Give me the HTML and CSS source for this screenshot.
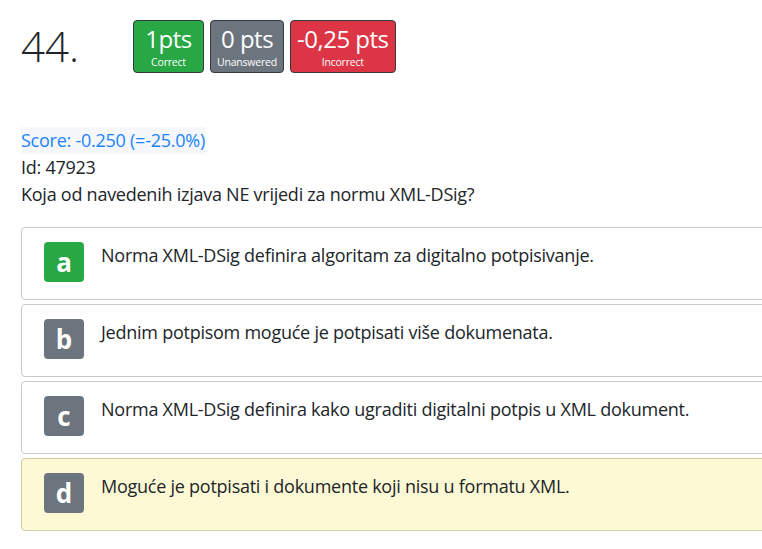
FILE: index.html
```html
<!DOCTYPE html>
<html lang="hr">
<head>
<meta charset="utf-8">
<title>Pitanje 44</title>
<link rel="stylesheet" href="styles.css">
</head>
<body>
<div class="page">
  <div class="header">
    <div class="qnum">44.</div>
    <div class="badges">
      <div class="pts pts-correct"><span class="pts-val">1pts</span><span class="pts-lbl">Correct</span></div>
      <div class="pts pts-unanswered"><span class="pts-val">0 pts</span><span class="pts-lbl">Unanswered</span></div>
      <div class="pts pts-incorrect"><span class="pts-val">-0,25 pts</span><span class="pts-lbl">Incorrect</span></div>
    </div>
  </div>
  <div class="meta">
    <span class="score">Score: -0.250 (=-25.0%)</span>
    <div class="qid">Id: 47923</div>
    <div class="qtext">Koja od navedenih izjava NE vrijedi za normu XML-DSig?</div>
  </div>
  <div class="answers">
    <div class="answer">
      <div class="letter letter-correct">a</div>
      <div class="atext">Norma XML-DSig definira algoritam za digitalno potpisivanje.</div>
    </div>
    <div class="answer">
      <div class="letter">b</div>
      <div class="atext">Jednim potpisom moguće je potpisati više dokumenata.</div>
    </div>
    <div class="answer">
      <div class="letter">c</div>
      <div class="atext">Norma XML-DSig definira kako ugraditi digitalni potpis u XML dokument.</div>
    </div>
    <div class="answer answer-selected">
      <div class="letter">d</div>
      <div class="atext">Moguće je potpisati i dokumente koji nisu u formatu XML.</div>
    </div>
  </div>
</div>
</body>
</html>
```

FILE: styles.css
```css
html, body {
  margin: 0;
  padding: 0;
  overflow: hidden;
  background: #fff;
}

body {
  font-family: "Open Sans", "Noto Sans", sans-serif;
  color: #212529;
  font-size: 18px;
  line-height: 27px;
  letter-spacing: -0.25px;
}

.page {
  padding: 20px 0 0 21px;
  width: 800px;
}

.header {
  display: flex;
  align-items: flex-start;
}

.qnum {
  width: 112px;
  font-size: 42px;
  font-weight: 300;
  line-height: 51px;
  letter-spacing: 0;
  color: #212529;
}

.badges {
  display: flex;
  gap: 6px;
}

.pts {
  display: flex;
  flex-direction: column;
  align-items: center;
  min-width: 71px;
  box-sizing: border-box;
  height: 53px;
  padding: 4px 6px 0;
  border: 1px solid #343a40;
  border-radius: 4px;
  color: #fff;
}

.pts-val {
  font-size: 24px;
  line-height: 28px;
  letter-spacing: -0.5px;
}

.pts-lbl {
  font-size: 10.5px;
  line-height: 18px;
  letter-spacing: -0.2px;
  font-weight: 500;
}

.pts-correct { background: #28a745; }
.pts-unanswered { background: #6c757d; }
.pts-incorrect { background: #dc3545; }

.meta {
  margin-top: 54px;
}

.score {
  display: inline-block;
  background: #f5f7fa;
  color: #1a84ff;
}

.answers {
  margin-top: 19px;
  display: flex;
  flex-direction: column;
  gap: 4px;
}

.answer {
  display: flex;
  align-items: flex-start;
  box-sizing: border-box;
  height: 73px;
  padding: 14px 22px 0;
  border: 1px solid #c9c9c9;
  border-radius: 4px;
  background: #fff;
}

.answer-selected {
  background: #fef9d5;
  border-color: #cfcaa6;
}

.letter {
  flex: none;
  width: 40px;
  height: 40px;
  border-radius: 4px;
  background: #6c757d;
  color: #fff;
  font-weight: 700;
  font-size: 26px;
  line-height: 40px;
  letter-spacing: 0;
  text-align: center;
}

.letter-correct {
  background: #28a745;
}

.atext {
  margin-left: 17px;
}
```
